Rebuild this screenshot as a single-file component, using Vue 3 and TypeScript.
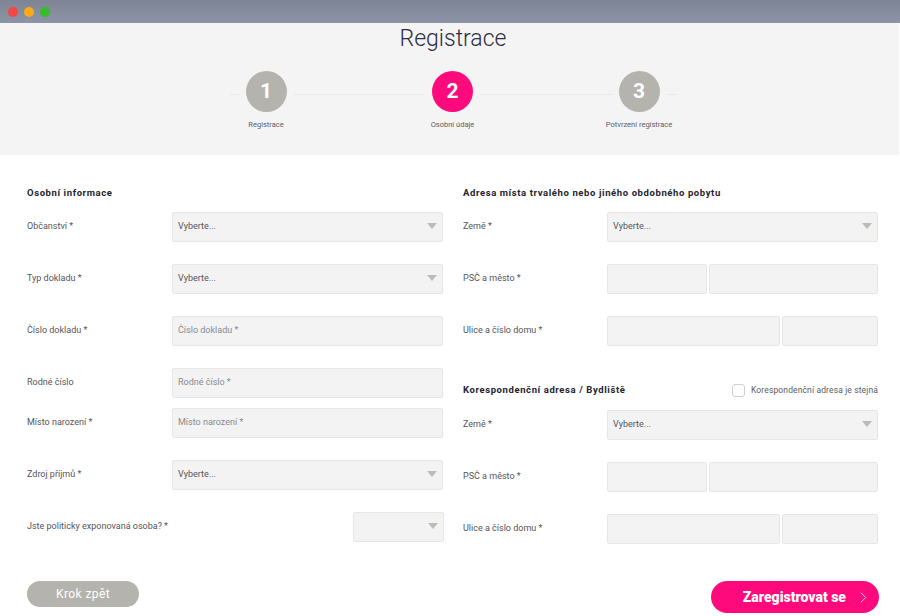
<script setup lang="ts">
type Field = { label: string; kind: 'select' | 'input' | 'pair'; placeholder?: string; tight?: boolean; small?: boolean; value?: string; pair?: 'psc' | 'street' }

const steps = [
  { n: 1, label: 'Registrace', active: false },
  { n: 2, label: 'Osobní údaje', active: true },
  { n: 3, label: 'Potvrzení registrace', active: false },
]

const personal: Field[] = [
  { label: 'Občanství *', kind: 'select', value: 'Vyberte...' },
  { label: 'Typ dokladu *', kind: 'select', value: 'Vyberte...' },
  { label: 'Číslo dokladu *', kind: 'input', placeholder: 'Číslo dokladu *' },
  { label: 'Rodné číslo', kind: 'input', placeholder: 'Rodné číslo *' },
  { label: 'Místo narození *', kind: 'input', placeholder: 'Místo narození *', tight: true },
  { label: 'Zdroj příjmů *', kind: 'select', value: 'Vyberte...' },
  { label: 'Jste politicky exponovaná osoba? *', kind: 'select', value: '', small: true },
]

const address: Field[] = [
  { label: 'Země *', kind: 'select', value: 'Vyberte...' },
  { label: 'PSČ a město *', kind: 'pair', pair: 'psc' },
  { label: 'Ulice a číslo domu *', kind: 'pair', pair: 'street' },
]
</script>

<template>
  <div class="window">
    <div class="titlebar">
      <span class="dot red"></span>
      <span class="dot amber"></span>
      <span class="dot green"></span>
    </div>

    <header class="hero">
      <h1 class="title">Registrace</h1>
      <ol class="steps">
        <li v-for="s in steps" :key="s.n" class="step">
          <div class="track">
            <span class="line"></span>
            <span class="circle" :class="{ active: s.active }">{{ s.n }}</span>
            <span class="line"></span>
          </div>
          <span class="step-label">{{ s.label }}</span>
        </li>
      </ol>
    </header>

    <main class="form">
      <section class="col">
        <h2 class="heading">Osobní informace</h2>
        <div
          v-for="f in personal"
          :key="f.label"
          class="field"
          :class="{ tight: f.tight }"
        >
          <label class="label">{{ f.label }}</label>
          <div v-if="f.kind === 'select'" class="control select" :class="{ small: f.small }">
            <span>{{ f.value }}</span>
            <i class="caret"></i>
          </div>
          <div v-else class="control placeholder">{{ f.placeholder }}</div>
        </div>
      </section>

      <section class="col">
        <h2 class="heading">Adresa místa trvalého nebo jiného obdobného pobytu</h2>
        <div v-for="f in address" :key="f.label" class="field">
          <label class="label">{{ f.label }}</label>
          <div v-if="f.kind === 'select'" class="control select">
            <span>{{ f.value }}</span>
            <i class="caret"></i>
          </div>
          <div v-else class="pair" :class="f.pair">
            <div class="control"></div>
            <div class="control"></div>
          </div>
        </div>

        <div class="heading-row">
          <h2 class="heading">Korespondenční adresa / Bydliště</h2>
          <label class="same">
            <span class="check"></span>
            <span>Korespondenční adresa je stejná</span>
          </label>
        </div>
        <div v-for="f in address" :key="'c' + f.label" class="field">
          <label class="label">{{ f.label }}</label>
          <div v-if="f.kind === 'select'" class="control select">
            <span>{{ f.value }}</span>
            <i class="caret"></i>
          </div>
          <div v-else class="pair" :class="f.pair">
            <div class="control"></div>
            <div class="control"></div>
          </div>
        </div>
      </section>
    </main>

    <footer class="actions">
      <button class="btn back" type="button">Krok zpět</button>
      <button class="btn next" type="button">
        <span>Zaregistrovat se</span>
        <svg class="chev" width="7" height="11" viewBox="0 0 7 11" fill="none">
          <path d="M1 .8l4.7 4.7L1 10.2" stroke="#ffd0e6" stroke-width="1" />
        </svg>
      </button>
    </footer>
  </div>
</template>

<style>
html, body { margin: 0; background: #fff; }
</style>

<style scoped>
.window {
  width: 900px;
  height: 616px;
  overflow: hidden;
  background: #fff;
  font-family: Roboto, "Liberation Sans", sans-serif;
  color: #3a3a44;
}
.titlebar {
  height: 23px;
  box-sizing: border-box;
  padding-left: 8px;
  display: flex;
  align-items: center;
  gap: 6px;
  background: linear-gradient(#7e8493, #8c94a6);
}
.dot { width: 10px; height: 10px; border-radius: 50%; }
.red { background: #f64646; }
.amber { background: #fbaa17; }
.green { background: #37bb29; }

.hero {
  width: 899px;
  height: 132px;
  background: #f4f4f4;
  display: flex;
  flex-direction: column;
  align-items: center;
}
.title {
  margin: 0;
  padding-left: 7px;
  font-weight: 300;
  font-size: 23px;
  line-height: 31px;
  letter-spacing: 0;
  color: #2d2d3e;
}
.steps {
  list-style: none;
  margin: 17px 0 0 6px;
  padding: 0;
  display: flex;
}
.step {
  width: 186.5px;
  display: flex;
  flex-direction: column;
  align-items: center;
}
.track {
  display: grid;
  grid-template-columns: 1fr 41px 1fr;
  align-items: center;
  width: 100%;
  column-gap: 7px;
}
.line { height: 1px; background: #e9e9e9; position: relative; top: 3px; }
.step:first-child .line:first-child { width: 9px; justify-self: end; }
.step:last-child .line:last-child { width: 10px; justify-self: start; }
.circle {
  width: 41px;
  height: 41px;
  border-radius: 50%;
  background: #b5b3ad;
  color: #fff;
  font-weight: 700;
  font-size: 21px;
  line-height: 40px;
  text-align: center;
}
.circle.active { background: #ff0a7d; }
.step-label {
  margin-top: 8px;
  font-size: 7.5px;
  line-height: 10px;
  color: #5c5c63;
}

.form {
  display: grid;
  grid-template-columns: 416px 415px;
  column-gap: 20px;
  padding: 0 21px 0 27px;
}
.col { min-width: 0; }
.heading {
  margin: 0;
  font-size: 9.5px;
  line-height: 12px;
  font-weight: 700;
  letter-spacing: 0.6px;
  color: #24242f;
}
.col > .heading { padding-top: 32px; padding-bottom: 13px; }
.field {
  display: grid;
  grid-template-columns: 145px 1fr;
  align-items: center;
  height: 30px;
  margin-bottom: 22px;
}
.col:last-child .field { grid-template-columns: 144px 1fr; }
.field.tight { margin-top: -12px; }
.label {
  font-size: 9px;
  line-height: 12px;
  padding-bottom: 2px;
  color: #55555c;
}
.control {
  box-sizing: border-box;
  height: 30px;
  background: #f3f3f3;
  border: 1px solid #e6e6e6;
  border-radius: 2px;
  font-size: 9px;
  line-height: 26px;
  padding: 0 5px;
  color: #55555c;
}
.placeholder { color: #8a8a8e; }
.select {
  display: flex;
  align-items: center;
  justify-content: space-between;
  padding: 0 5px 2px;
}
.select.small { width: 91px; justify-self: end; margin-right: -1px; }
.caret {
  width: 0;
  height: 0;
  border-left: 5px solid transparent;
  border-right: 5px solid transparent;
  border-top: 6px solid #bdbbb5;
}
.pair { display: grid; column-gap: 2px; }
.pair.psc { grid-template-columns: 100px 1fr; }
.pair.street { grid-template-columns: 172.5px 1fr; column-gap: 2.5px; }
.heading-row {
  display: flex;
  align-items: center;
  justify-content: space-between;
  height: 14px;
  margin-top: 37px;
  margin-bottom: 13px;
}
.same {
  display: flex;
  align-items: center;
  gap: 6px;
  font-size: 8.5px;
  color: #5c5c63;
  letter-spacing: 0.13px;
}
.check {
  box-sizing: border-box;
  width: 13px;
  height: 13px;
  border: 1px solid #cfcfcf;
  border-radius: 3px;
  background: #fff;
}

.actions {
  display: flex;
  justify-content: space-between;
  align-items: flex-start;
  padding: 0 21px 0 27px;
  margin-top: 15px;
}
.btn {
  border: 0;
  color: #fff;
  font-family: inherit;
  padding: 0;
  border-radius: 16px;
}
.back {
  width: 112px;
  height: 26px;
  background: #b5b3ad;
  font-size: 12px;
  font-weight: 400;
  letter-spacing: 0.4px;
}
.next {
  width: 168px;
  height: 32px;
  background: #ff0a7d;
  font-size: 14px;
  font-weight: 900;
  display: flex;
  align-items: center;
  justify-content: flex-end;
  gap: 14px;
  padding-right: 12px;
}
.chev { flex: none; }
</style>
